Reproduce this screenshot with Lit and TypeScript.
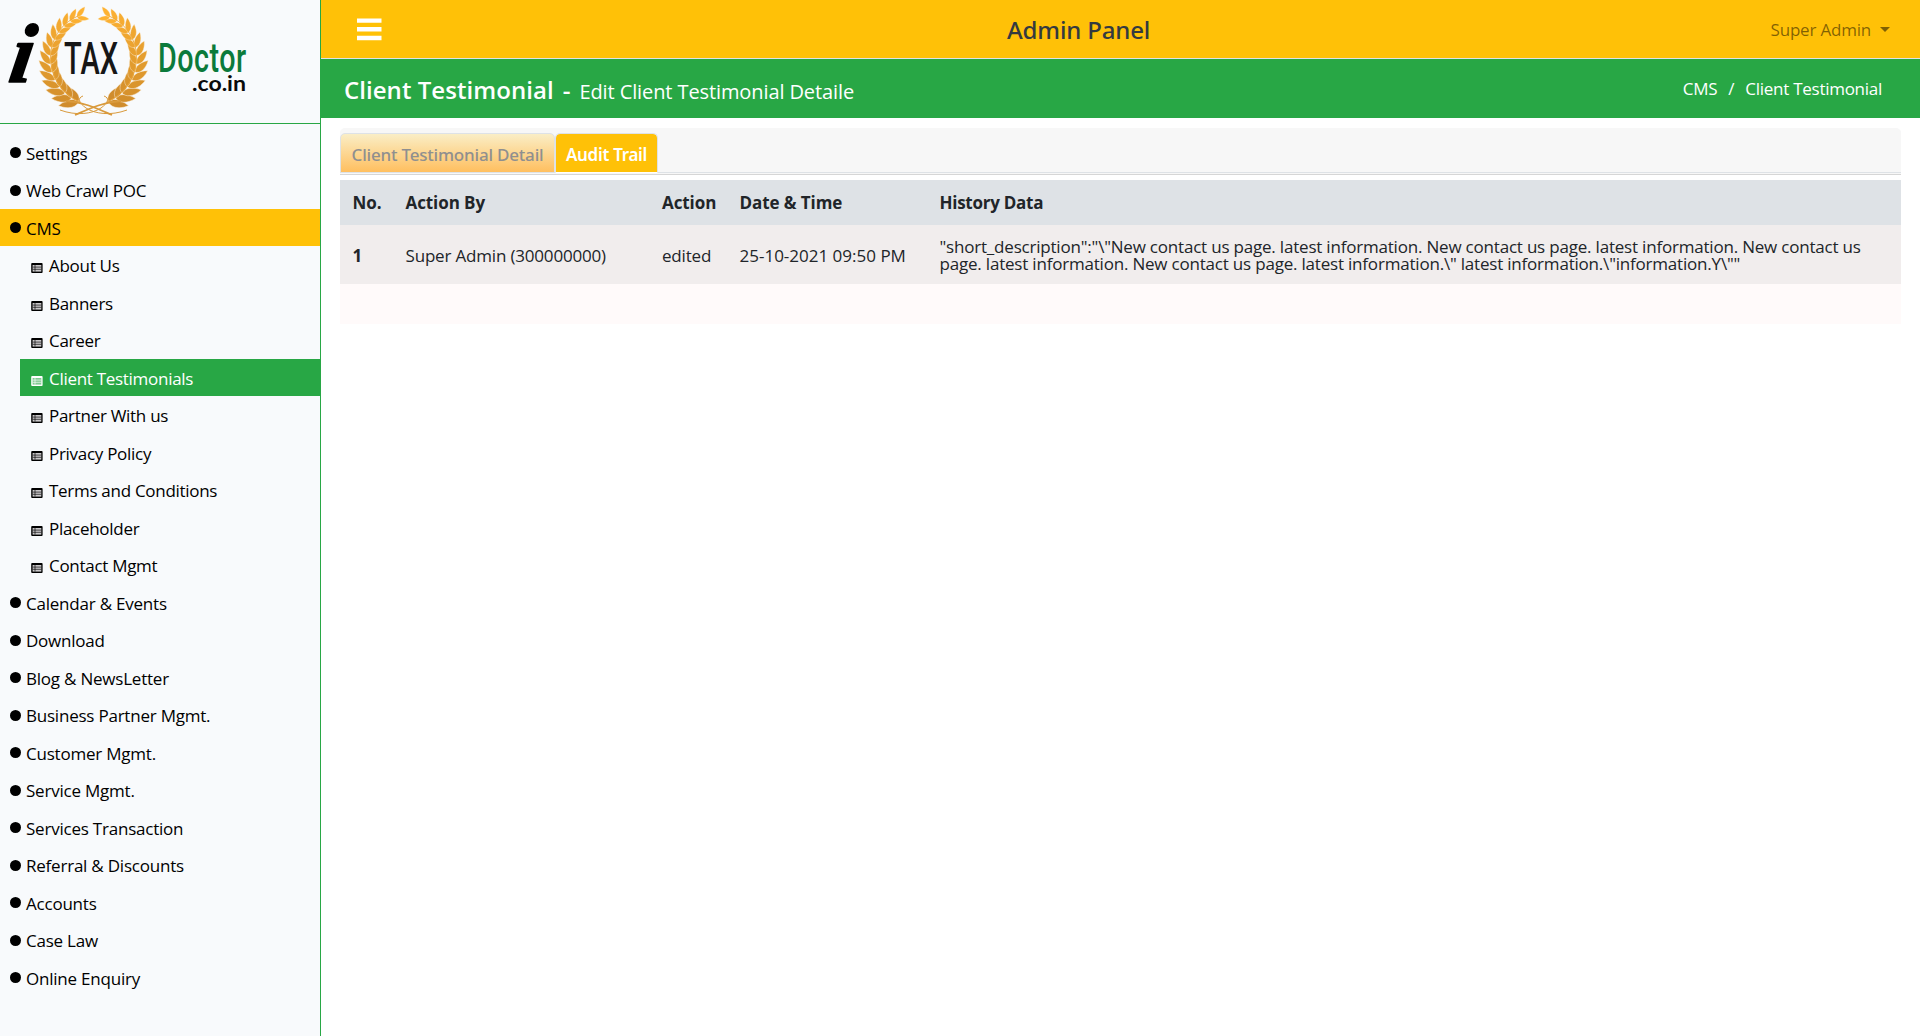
import { LitElement, html, css, svg, nothing } from "lit";
import { customElement } from "lit/decorators.js";
import { classMap } from "lit/directives/class-map.js";

const FONT = css`"Segoe UI", "Open Sans", "Noto Sans", sans-serif`;
const FONT_MEDIUM = css`"Segoe UI", "Noto Sans", "Open Sans", sans-serif`;

interface NavItem {
  label: string;
  active?: boolean;
  children?: NavItem[];
}

const NAV: NavItem[] = [
  { label: "Settings" },
  { label: "Web Crawl POC" },
  {
    label: "CMS",
    active: true,
    children: [
      { label: "About Us" },
      { label: "Banners" },
      { label: "Career" },
      { label: "Client Testimonials", active: true },
      { label: "Partner With us" },
      { label: "Privacy Policy" },
      { label: "Terms and Conditions" },
      { label: "Placeholder" },
      { label: "Contact Mgmt" },
    ],
  },
  { label: "Calendar & Events" },
  { label: "Download" },
  { label: "Blog & NewsLetter" },
  { label: "Business Partner Mgmt." },
  { label: "Customer Mgmt." },
  { label: "Service Mgmt." },
  { label: "Services Transaction" },
  { label: "Referral & Discounts" },
  { label: "Accounts" },
  { label: "Case Law" },
  { label: "Online Enquiry" },
];

/* Left branch of the wreath: pairs of leaves along an arc, bottom to top. */
const LEAF = "M0 0C1.8 -3.4 7 -4.2 13 -0.6C8 2.6 3 2.8 0 0Z";
const mix = (a: number, b: number, t: number) => Math.round(a + (b - a) * t);
const branch = () => {
  const leaves = [];
  const count = 14;
  for (let i = 0; i < count; i++) {
    const t = i / (count - 1);
    const deg = 110 + t * 138;
    const a = (deg * Math.PI) / 180;
    const x = 93.5 + 43 * Math.cos(a);
    const y = 59 + 45 * Math.sin(a);
    const dir = deg + 90;
    const s = 1.6 - 0.6 * t;
    const fill = `rgb(${mix(208, 253, t)} ${mix(140, 178, t)} ${mix(44, 50, t)})`;
    leaves.push(svg`<g fill=${fill}>
      <path d=${LEAF} transform="translate(${x} ${y}) rotate(${dir - 30}) scale(${s})"></path>
      <path d=${LEAF} transform="translate(${x} ${y}) rotate(${dir + 28}) scale(${s * 0.92} ${-s * 0.92})"></path></g>`);
  }
  return svg`<g stroke="#fbf3e4" stroke-width="0.3">${leaves}</g>
    <path d="M80 102C62 94 48 76 51 50C54 34 64 22 78 16" fill="none" stroke="#eda637" stroke-width="0.9"></path>`;
};

@customElement("brand-logo")
class BrandLogo extends LitElement {
  static styles = css`
    :host { display: block; }
    .art { display: block; }
    .i { font: italic 700 84px "Liberation Serif", serif; }
    .tax { font: 500 44px Roboto, sans-serif; }
    .doctor { font: 500 41px Roboto, sans-serif; }
    .tld { font: 700 21px Lato, sans-serif; }
  `;
  render() {
    return html`<svg class="art" width="320" height="123" viewBox="0 0 320 123">
      ${branch()}
      <g transform="translate(187 0) scale(-1 1)">${branch()}</g>
      <g fill="none" stroke="#d99a3c" stroke-width="1">
        <path d="M60 110C76 116 92 114 101 108C108 103 110 98 104 96"></path>
        <path d="M127 110C111 116 95 114 86 108C79 103 77 98 83 96"></path>
        <path d="M66 101C84 102 98 109 112 115" stroke-width="1.8"></path>
        <path d="M121 101C103 102 89 109 75 115" stroke-width="1.8"></path>
      </g>
      <text class="i" transform="translate(7 82) skewX(-9)" fill="#000" stroke="#000" stroke-width="1.6" stroke-linejoin="round">i</text>
      <text class="tax" transform="translate(64 73.5) scale(0.66 1)" textLength="82" fill="#161616">TAX</text>
      <text class="doctor" transform="translate(158 71.5) scale(0.7 1)" textLength="126" fill="#0b7a3b">Doctor</text>
      <text class="tld" x="192" y="91" textLength="54" lengthAdjust="spacingAndGlyphs" fill="#0a0a0a">.co.in</text>
    </svg>`;
  }
}

@customElement("side-nav")
class SideNav extends LitElement {
  static styles = css`
    :host { display: flex; flex-direction: column; width: 320px; flex: none; background: #f8fafc; border-right: 1px solid #28a745; font-family: ${FONT}; }
    .brand { height: 123px; border-bottom: 1px solid #28a745; }
    .list { display: flex; flex-direction: column; padding-top: 9.5px; }
    .item { display: flex; align-items: center; box-sizing: border-box; height: 37.5px; padding: 3px 0 0 10px; font-size: 17px; line-height: 24px; letter-spacing: -0.22px; color: #000; white-space: nowrap; }
    .item.on { background: #ffc107; }
    .item.child { margin-left: 20px; padding: 2.5px 0 0 11px; letter-spacing: -0.29px; }
    .item.child.on { background: #28a745; color: #fff; }
    .dot { width: 11px; height: 11px; margin: -2px 5px 0 0; border-radius: 50%; background: #000; }
    .icon { display: block; width: 12px; height: 10px; margin: 4px 6px 0 0; }
  `;
  private row(item: NavItem, child = false): unknown {
    const icon = child
      ? html`<svg class="icon" viewBox="0 0 12 10">
          <rect x="0.2" y="0" width="11.4" height="10" rx="1" fill="currentColor"></rect>
          <rect x="1.6" y="2" width="8.7" height="6.6" fill=${item.active ? "#7fca91" : "#c9c7c9"}></rect>
          <path d="M1.6 4.1H10.3M1.6 6.3H10.3M4 2V8.6" stroke="currentColor" stroke-width="0.65"></path>
        </svg>`
      : html`<span class="dot"></span>`;
    return html`<div class=${classMap({ item: true, child, on: !!item.active })}>${icon}<span>${item.label}</span></div>
      ${item.children ? item.children.map((c) => this.row(c, true)) : nothing}`;
  }
  render() {
    return html`<div class="brand"><brand-logo></brand-logo></div>
      <nav class="list">${NAV.map((n) => this.row(n))}</nav>`;
  }
}

const HISTORY =
  '"short_description":"\\"New contact us page. latest information. New contact us page. latest information. New contact us page. latest information. New contact us page. latest information.\\" latest information.\\"information.Y\\""';

@customElement("audit-table")
class AuditTable extends LitElement {
  static styles = css`
    :host { display: block; font-family: ${FONT}; font-size: 17px; color: #212529; background: #fffafa; }
    .row { display: grid; grid-template-columns: 53px 256.5px 77.5px 200px 1fr; align-items: center; }
    .row > div { padding: 1px 0 0 12.5px; white-space: nowrap; letter-spacing: -0.18px; }
    .row.head { height: 45px; background: #dee2e6; font-weight: 700; }
    .head > div { padding-top: 0; letter-spacing: -0.08px; }
    .head > .wide { letter-spacing: -0.26px; }
    .body { height: 59px; background: #f1eded; }
    .no { font-weight: 700; }
    .row > .when { letter-spacing: 0; }
    .body > .history { padding: 0 12px 0 12.5px; white-space: normal; line-height: 17px; letter-spacing: -0.2px; }
    .rest { height: 40px; }
  `;
  render() {
    return html`
      <div class="row head"><div>No.</div><div>Action By</div><div>Action</div><div>Date &amp; Time</div><div class="wide">History Data</div></div>
      <div class="row body">
        <div class="no">1</div><div>Super Admin (300000000)</div><div>edited</div><div class="when">25-10-2021 09:50 PM</div>
        <div class="history">${HISTORY}</div>
      </div>
      <div class="rest"></div>`;
  }
}

@customElement("app-root")
class AppRoot extends LitElement {
  static styles = css`
    :host { display: flex; height: 1036px; background: #fff; font-family: ${FONT}; overflow: hidden; }
    .main { flex: 1; min-width: 0; display: flex; flex-direction: column; }
    .top { display: grid; grid-template-columns: 650px 1fr auto; align-items: center; height: 58px; padding: 0 30px 0 36px; background: #ffc107; border-bottom: 1px solid #dee2e6; }
    .burger { display: block; width: 25px; height: 23px; }
    .panel { font-family: ${FONT_MEDIUM}; font-size: 24px; font-weight: 500; letter-spacing: -0.15px; color: #343a40; }
    .user { display: flex; align-items: center; gap: 9px; font-size: 17px; letter-spacing: -0.2px; color: rgba(0, 0, 0, 0.5); }
    .caret { width: 0; border: 5px solid transparent; border-top-color: rgba(0, 0, 0, 0.5); border-bottom: 0; margin-top: 1px; }
    .title { display: flex; align-items: center; justify-content: space-between; height: 59px; padding: 0 38px 0 23px; background: #28a745; color: #fff; }
    .heading { display: flex; align-items: baseline; gap: 9px; padding-top: 1px; font-size: 24px; font-weight: 600; letter-spacing: 0.05px; }
    .sub { font-size: 20px; font-weight: 400; letter-spacing: -0.1px; }
    .crumbs { display: flex; gap: 11px; font-size: 17px; letter-spacing: -0.27px; }
    .content { padding: 10px 19px 0; }
    .tabs { display: flex; align-items: flex-end; height: 45px; background: #f7f7f7; border-radius: 5px 5px 0 0; box-shadow: inset 0 -1px #dee2e6; }
    .tab { display: flex; align-items: center; justify-content: center; box-sizing: border-box; width: 215px; height: 40px; padding-top: 3px; border: 1px solid #dee2e6; border-radius: 5px 5px 0 0; font-family: ${FONT_MEDIUM}; font-size: 17px; font-weight: 500; letter-spacing: -0.2px; color: #8f8f8f; white-space: nowrap; background: linear-gradient(#faeec6, #ffbf5f); }
    .tab.on { width: 103px; border-bottom-color: #fff; background: #ffc107; background-clip: padding-box; color: #fff; font-weight: 600; letter-spacing: -0.3px; }
    .rule { height: 1px; margin-bottom: 5px; background: #f7f7f7; border-bottom: 1px solid #d6d6d6; }
  `;
  render() {
    return html`
      <side-nav></side-nav>
      <div class="main">
        <header class="top">
          <svg class="burger" viewBox="0 0 25 23"><path d="M0 2.6H24.5M0 11.3H24.5M0 20H24.5" stroke="#fff" stroke-width="4.4"></path></svg>
          <div class="panel">Admin Panel</div>
          <div class="user"><span>Super Admin</span><span class="caret"></span></div>
        </header>
        <div class="title">
          <div class="heading"><span>Client Testimonial</span><span>-</span><span class="sub">Edit Client Testimonial Detaile</span></div>
          <div class="crumbs"><span>CMS</span><span>/</span><span>Client Testimonial</span></div>
        </div>
        <section class="content">
          <div class="tabs"><div class="tab">Client Testimonial Detail</div><div class="tab on">Audit Trail</div></div>
          <div class="rule"></div>
          <audit-table></audit-table>
        </section>
      </div>`;
  }
}
